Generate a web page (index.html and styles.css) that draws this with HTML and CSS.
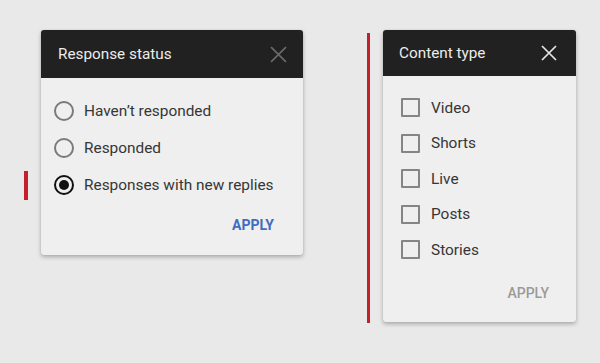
FILE: index.html
```html
<!DOCTYPE html>
<html>
<head>
<meta charset="utf-8">
<link rel="stylesheet" href="styles.css">
</head>
<body>
<div class="page">
  <div class="group group-left">
    <div class="marker"></div>
    <div class="card card-status">
      <div class="card-head">
        <span class="card-title">Response status</span>
        <svg class="close close-dim" viewBox="0 0 16 16" width="17" height="17"><path d="M1 1L15 15M15 1L1 15" stroke="currentColor" stroke-width="1.6" fill="none"/></svg>
      </div>
      <div class="card-body">
        <div class="row"><span class="radio"></span><span class="label">Haven’t responded</span></div>
        <div class="row"><span class="radio"></span><span class="label">Responded</span></div>
        <div class="row"><span class="radio checked"></span><span class="label">Responses with new replies</span></div>
      </div>
      <div class="card-foot"><span class="apply apply-active">APPLY</span></div>
    </div>
  </div>
  <div class="group group-right">
    <div class="line"></div>
    <div class="card card-type">
      <div class="card-head">
        <span class="card-title">Content type</span>
        <svg class="close close-bright" viewBox="0 0 16 16" width="16" height="16"><path d="M1 1L15 15M15 1L1 15" stroke="currentColor" stroke-width="1.7" fill="none"/></svg>
      </div>
      <div class="card-body">
        <div class="row"><span class="check"></span><span class="label">Video</span></div>
        <div class="row"><span class="check"></span><span class="label">Shorts</span></div>
        <div class="row"><span class="check"></span><span class="label">Live</span></div>
        <div class="row"><span class="check"></span><span class="label">Posts</span></div>
        <div class="row"><span class="check"></span><span class="label">Stories</span></div>
      </div>
      <div class="card-foot"><span class="apply apply-idle">APPLY</span></div>
    </div>
  </div>
</div>
</body>
</html>
```
FILE: styles.css
```css
html, body {
  margin: 0;
  padding: 0;
  background: #e9e9e9;
  font-family: Roboto, "Liberation Sans", Arial, sans-serif;
}
.page {
  width: 600px;
  height: 363px;
  display: flex;
  align-items: flex-start;
  padding: 30px 0 0 24px;
  box-sizing: border-box;
}
.group {
  display: flex;
  align-items: flex-start;
}
.marker {
  width: 4px;
  height: 29px;
  margin-top: 141px;
  margin-right: 13px;
  background: #c3202c;
}
.line {
  width: 3px;
  height: 290px;
  margin-top: 3px;
  margin-right: 13px;
  background: #c3202c;
}
.group-right {
  margin-left: 64px;
}
.card {
  background: #efefef;
  border-radius: 3px;
  box-shadow: 0 2px 4px rgba(0,0,0,0.28), 0 0 1px rgba(0,0,0,0.15);
  overflow: hidden;
  display: flex;
  flex-direction: column;
}
.card-status {
  width: 262px;
  height: 225px;
}
.card-type {
  width: 193px;
  height: 292px;
}
.card-head {
  background: #212121;
  display: flex;
  align-items: center;
  justify-content: space-between;
  padding: 0 16px 0 17px;
}
.card-status .card-head { height: 48px; }
.card-type .card-head { height: 46px; padding: 0 19px 0 16px; }
.card-title {
  color: #ececec;
  font-size: 15.3px;
}
.close-dim { color: #6a6a6a; }
.close-bright { color: #e6e6e6; }
.card-body {
  display: flex;
  flex-direction: column;
}
.card-status .card-body { padding: 14px 0 0 13px; }
.card-type .card-body { padding: 14px 0 0 18px; }
.row {
  display: flex;
  align-items: center;
}
.card-status .row { height: 37px; }
.card-type .row { height: 35.5px; }
.label {
  font-size: 15.4px;
  color: #363636;
}
.radio {
  width: 16px;
  height: 16px;
  border: 2px solid #7a7a7a;
  border-radius: 50%;
  margin-right: 10px;
  position: relative;
  flex: none;
}
.radio.checked {
  border-color: #111;
}
.radio.checked::after {
  content: "";
  position: absolute;
  left: 3px;
  top: 3px;
  width: 10px;
  height: 10px;
  border-radius: 50%;
  background: #111;
}
.check {
  width: 15px;
  height: 15px;
  border: 2px solid #858585;
  border-radius: 1px;
  margin-right: 11px;
  flex: none;
}
.card-foot {
  display: flex;
  justify-content: flex-end;
}
.card-status .card-foot { padding: 14px 29px 0 0; }
.card-type .card-foot { padding: 17px 27px 0 0; }
.apply {
  font-size: 14px;
  font-weight: 700;
  line-height: 16px;
}
.apply-active { color: #3f6cbf; }
.apply-idle { color: #9a9a9a; font-weight: 500; }
```
